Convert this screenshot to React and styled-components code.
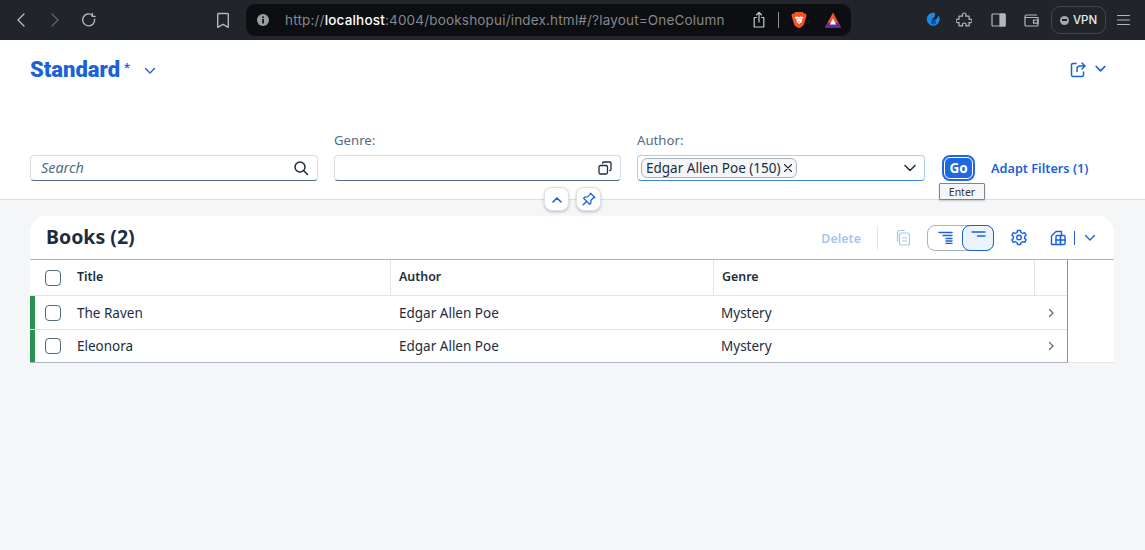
import React from "react";
import styled, { createGlobalStyle } from "styled-components";

const GlobalStyle = createGlobalStyle`
  html, body {
    margin: 0;
    padding: 0;
    background: #f5f6f7;
  }
  * {
    box-sizing: border-box;
  }
`;

const Page = styled.div`
  width: 1145px;
  height: 550px;
  overflow: hidden;
  display: flex;
  flex-direction: column;
  background: #f5f6f7;
  font-family: "Noto Sans", "Open Sans", sans-serif;
  font-size: 13.5px;
  color: #1d2d3e;
`;

/* browser chrome */
const BrowserBar = styled.div`
  height: 40px;
  flex: none;
  display: flex;
  align-items: center;
  background: #212529;
  color: #b4b7ba;
`;

const ChromeIcon = styled.span`
  display: inline-flex;
  flex: none;
  margin-left: ${({ $ml }) => $ml || 0}px;
  opacity: ${({ $dim }) => ($dim ? 0.4 : 1)};
`;

const UrlPill = styled.div`
  width: 605px;
  height: 32px;
  margin-left: 16px;
  flex: none;
  display: flex;
  align-items: center;
  padding-left: 10px;
  border-radius: 9px;
  background: #0d0e12;
`;

const UrlText = styled.div`
  margin-left: 15px;
  width: 451px;
  font-family: Inter, sans-serif;
  font-size: 13.5px;
  letter-spacing: 0.18px;
  white-space: nowrap;
  color: #85878a;
  b {
    font-weight: 500;
    color: #fff;
  }
`;

const PillDivider = styled.span`
  width: 1px;
  height: 16px;
  margin-left: 12px;
  background: #8d8f92;
`;

const VpnButton = styled.div`
  width: 55px;
  height: 28px;
  margin-left: 12px;
  display: flex;
  align-items: center;
  justify-content: center;
  gap: 4px;
  border: 1px solid #43474b;
  border-radius: 9px;
  font-family: Inter, sans-serif;
  font-size: 11.5px;
  font-weight: 500;
  color: #e9eaeb;
`;

const VpnDot = styled.span`
  width: 9px;
  height: 9px;
  border-radius: 50%;
  background: #a4a7ab;
  display: flex;
  align-items: center;
  justify-content: center;
  &::after {
    content: "";
    width: 5px;
    height: 1.5px;
    background: #212529;
  }
`;

/* dynamic page header */
const Header = styled.header`
  height: 160px;
  flex: none;
  position: relative;
  display: flex;
  flex-direction: column;
  padding: 0 31px 0 30px;
  background: #fff;
  border-bottom: 1px solid #dcdee0;
`;

const TitleRow = styled.div`
  height: 60px;
  flex: none;
  display: flex;
  align-items: center;
  justify-content: space-between;
`;

const VariantTitle = styled.div`
  display: flex;
  align-items: center;
  color: #1b62d8;
  font-family: Roboto, sans-serif;
  font-size: 22px;
  font-weight: 900;
  margin-top: -2px;
  sup {
    font-size: 13px;
    font-weight: 700;
    margin-left: 4px;
    line-height: 1;
    align-self: flex-start;
    margin-top: 4px;
  }
`;

const VariantChevron = styled.span`
  display: inline-flex;
  margin-left: 14px;
  margin-top: 3px;
`;

const ShareGroup = styled.div`
  display: flex;
  align-items: center;
  gap: 8px;
  margin: -2px 8px 0 0;
`;

const FilterBar = styled.div`
  display: flex;
  align-items: flex-end;
  margin-top: 34px;
  gap: 16px;
`;

const FilterField = styled.div`
  width: ${({ $w }) => $w}px;
  flex: none;
  display: flex;
  flex-direction: column;
`;

const FilterLabel = styled.label`
  height: 21px;
  font-size: 13.2px;
  line-height: 13px;
  color: #556b81;
`;

const InputBox = styled.div`
  height: 26px;
  display: flex;
  align-items: center;
  justify-content: space-between;
  padding: 0 8px 0 ${({ $tag }) => ($tag ? 3 : 10)}px;
  background: #fff;
  border: 1px solid ${({ $focus }) => ($focus ? "#a9cdf5" : "#d9dde1")};
  border-bottom: 1px solid ${({ $focus }) => ($focus ? "#3f86e0" : "#556b81")};
  border-radius: 4px;
`;

const SearchText = styled.span`
  margin-top: -2px;
  font-style: italic;
  font-size: 14.4px;
  color: #556b81;
`;

const Token = styled.span`
  height: 20px;
  display: inline-flex;
  align-items: center;
  padding: 0 3px 0 4px;
  gap: 2px;
  border: 1px solid #a9b4be;
  border-radius: 6px;
  background: #f5f6f7;
  font-size: 13.5px;
  white-space: nowrap;
`;

const GoWrap = styled.div`
  position: relative;
  width: 33px;
  height: 26px;
  flex: none;
  margin-left: 1px;
`;

const GoButton = styled.button`
  width: 33px;
  height: 26px;
  padding: 0;
  border: 2px solid #1f68e0;
  border-radius: 8px;
  outline: 1px solid #fff;
  outline-offset: -3px;
  background: #1f68e0;
  color: #fff;
  font-family: inherit;
  font-size: 13.5px;
  font-weight: 700;
`;

const Tooltip = styled.div`
  position: absolute;
  top: 28px;
  left: -3px;
  width: 46px;
  height: 17px;
  display: flex;
  align-items: center;
  justify-content: center;
  border: 1px solid #7d8690;
  border-radius: 1px;
  background: #f5f6f7;
  box-shadow: 0 1px 2px rgba(0, 0, 0, 0.2);
  font-size: 10.5px;
  color: #333;
  z-index: 2;
`;

const AdaptLink = styled.a`
  height: 26px;
  line-height: 26px;
  font-size: 12.7px;
  font-weight: 600;
  color: #1b62d8;
  white-space: nowrap;
`;

const HeaderButtons = styled.div`
  position: absolute;
  left: 544px;
  bottom: -12px;
  display: flex;
  gap: 7px;
  z-index: 1;
`;

const RoundButton = styled.button`
  width: 25px;
  height: 24px;
  padding: 0;
  display: flex;
  align-items: center;
  justify-content: center;
  background: #fff;
  border: 1px solid #dfe3e7;
  border-radius: 8px;
  box-shadow: 0 1px 3px rgba(85, 107, 129, 0.4);
`;

/* table panel */
const Content = styled.main`
  flex: 1;
  padding: 16px 31px 0 30px;
`;

const TablePanel = styled.section`
  background: #fff;
  border-radius: 16px 16px 0 0;
  border-bottom: 1px solid #e5e5e5;
`;

const TableToolbar = styled.div`
  height: 44px;
  display: flex;
  align-items: center;
  padding: 0 18px 0 16px;
  border-bottom: 1px solid #a9b4be;
`;

const TableTitle = styled.h2`
  margin: -2px auto 0 0;
  font-size: 19.5px;
  font-weight: 700;
  color: #1d2d3e;
`;

const DeleteText = styled.span`
  margin: 1px 0 0 0;
  font-size: 12.5px;
  font-weight: 600;
  color: #a9c5ef;
`;

const ToolDivider = styled.span`
  width: 1px;
  height: 24px;
  margin: 0 17px 0 16px;
  background: #e3e6e9;
`;

const SplitDivider = styled.span`
  width: 1px;
  height: 14px;
  margin: 0 9px 0 8px;
  background: #1b62d8;
`;

const Segmented = styled.div`
  width: 67px;
  height: 26px;
  margin-left: 16px;
  display: flex;
  border: 1px solid #a9b4be;
  border-radius: 8px;
`;

const Segment = styled.div`
  flex: 1;
  display: flex;
  align-items: center;
  justify-content: center;
  ${({ $active }) =>
    $active &&
    `
    flex: 0 0 32px;
    margin: -1px;
    background: #ebf3fd;
    border: 1px solid #1b62d8;
    border-radius: 8px;
  `}
`;

const ToolIcon = styled.span`
  display: inline-flex;
  margin-left: ${({ $ml }) => $ml || 0}px;
`;

const TableBody = styled.div`
  position: relative;
  width: 1038px;
  margin-bottom: -1px;
  border-right: 1px solid #8a939c;
  border-bottom: 1px solid #a9b4be;
`;

const Row = styled.div`
  display: grid;
  grid-template-columns: 361px 323px 321px 33px;
  height: ${({ $h }) => $h}px;
  border-bottom: ${({ $last }) => ($last ? "0" : "1px solid #e5e5e5")};
`;

const Cell = styled.div`
  display: flex;
  align-items: center;
  padding-left: ${({ $pl }) => $pl ?? 7}px;
  border-right: ${({ $line }) => ($line ? "1px solid #e5e5e5" : "0")};
  justify-content: ${({ $end }) => ($end ? "flex-end" : "flex-start")};
  padding-right: ${({ $end }) => ($end ? "13px" : "0")};
`;

const TitleCell = styled(Cell)`
  padding-left: 0;
`;

const HeadLabel = styled.span`
  margin-bottom: 3px;
  font-size: 12.4px;
  font-weight: 600;
`;

const Highlight = styled.span`
  width: 5px;
  align-self: stretch;
  flex: none;
  background: ${({ $on }) => ($on ? "#2a9250" : "transparent")};
`;

const Checkbox = styled.span`
  width: 16px;
  height: 16px;
  flex: none;
  margin: 0 16px 0 10px;
  border: 1px solid #556b81;
  border-radius: 4px;
  background: #fff;
`;

const Svg = ({ size = 16, w, h, children, stroke = "currentColor", sw = 1.4, fill = "none" }) => (
  <svg
    width={w || size}
    height={h || size}
    viewBox={`0 0 ${w || size} ${h || size}`}
    fill={fill}
    stroke={stroke}
    strokeWidth={sw}
    strokeLinecap="round"
    strokeLinejoin="round"
  >
    {children}
  </svg>
);

const BLUE = "#1b62d8";

const rows = [
  { title: "The Raven", author: "Edgar Allen Poe", genre: "Mystery", h: 34 },
  { title: "Eleonora", author: "Edgar Allen Poe", genre: "Mystery", h: 32, last: true },
];

function Browser() {
  return (
    <BrowserBar>
      <ChromeIcon $ml={16}>
        <Svg w={10} h={16}><path d="M8 2L2 8l6 6" /></Svg>
      </ChromeIcon>
      <ChromeIcon $ml={24} $dim>
        <Svg w={10} h={16}><path d="M2 2l6 6-6 6" /></Svg>
      </ChromeIcon>
      <ChromeIcon $ml={21}>
        <Svg size={16}>
          <path d="M13.6 7.2A6 6 0 1 1 11.5 3.3" />
          <path d="M11.8 1v3h3" transform="translate(-0.6 0.4)" />
        </Svg>
      </ChromeIcon>
      <ChromeIcon $ml={119}>
        <Svg w={14} h={17}><path d="M2.5 1.5h9a.8.8 0 0 1 .8.8v13l-5.3-3-5.3 3v-13a.8.8 0 0 1 .8-.8z" /></Svg>
      </ChromeIcon>
      <UrlPill>
        <Svg size={14} stroke="none" fill="#9b9da0">
          <circle cx="7" cy="7" r="6" />
          <rect x="6.2" y="6" width="1.7" height="4.5" fill="#0d0e12" />
          <rect x="6.2" y="3.4" width="1.7" height="1.7" fill="#0d0e12" />
        </Svg>
        <UrlText>
          http://<b>localhost</b>:4004/bookshopui/index.html#/?layout=OneColumn
        </UrlText>
        <ChromeIcon $ml={16}>
          <Svg w={14} h={18} sw={1.2} stroke="#c6c8ca">
            <path d="M4.5 6.5H2.2V16h9.6V6.5H9.5" />
            <path d="M7 11V1.5M4.6 3.8L7 1.5l2.4 2.3" />
          </Svg>
        </ChromeIcon>
        <PillDivider />
        <ChromeIcon $ml={12}>
          <Svg w={16} h={18} stroke="none" fill="#f1562b">
            <path d="M4.2 1h7.6l1.5 1.7 1.6-.3.6 2.2-.8 2.6-2.1 7-3 2.3-1.6.5-1.6-.5-3-2.3-2.1-7L.5 4.6l.6-2.2 1.6.3z" />
            <path d="M3.5 6.3L6 5.6l2 .7 2-.7 2.5.7-2 2.6.7 1.5L8 13l-2.7-2.6.7-1.5z" fill="#fff" />
            <path d="M6.3 7.3h1v1h-1zM8.7 7.3h1v1h-1zM7.4 10.2h1.2v1.3H7.4z" fill="#f1562b" />
          </Svg>
        </ChromeIcon>
        <ChromeIcon $ml={17}>
          <Svg w={18} h={16} stroke="none">
            <path d="M9 .5L1 15.5h16z" fill="#f1532b" />
            <path d="M1 15.5l2.700-5h10.600l2.700 5z" fill="#662d91" />
            <path d="M9 6.500l3.200 6H5.800z" fill="#fff" />
          </Svg>
        </ChromeIcon>
      </UrlPill>
      <ChromeIcon $ml={75}>
        <Svg w={14} h={16} stroke="none">
          <path d="M9 1a6.500 6.500 0 1 0 3.500 2.500C12 7 8 9 5.500 7.500 7.500 6.500 9.500 4.500 9 1z" fill="#1f88e5" />
          <circle cx="7.500" cy="10" r="2.500" fill="#0b4fb3" />
        </Svg>
      </ChromeIcon>
      <ChromeIcon $ml={16}>
        <Svg size={16} sw={1.2} stroke="#b4b7ba">
          <path d="M6.500 3.400a1.800 1.800 0 1 1 3.400 0l-.2.700h3.400v3.300l.7-.2a1.800 1.800 0 1 1 0 3.400l-.7-.2v3.500H9.800l.2-.7a1.800 1.800 0 1 0-3.500 0l.2.700H3v-3.500l-.7.200a1.800 1.800 0 1 1 0-3.400l.7.200V4.100h3.700z" />
        </Svg>
      </ChromeIcon>
      <ChromeIcon $ml={19}>
        <Svg w={15} h={14} sw={1.2} stroke="#b4b7ba">
          <rect x="1" y="1" width="13" height="12" rx="1" />
          <rect x="9" y="1" width="5" height="12" fill="#b4b7ba" />
        </Svg>
      </ChromeIcon>
      <ChromeIcon $ml={18}>
        <Svg w={15} h={14} sw={1.2} stroke="#b4b7ba">
          <path d="M1 3.500V12a1 1 0 0 0 1 1h11a1 1 0 0 0 1-1V4.500H2a1 1 0 0 1-1-1zm0 0A1.500 1.500 0 0 1 2.500 2h10" />
          <rect x="9.500" y="7" width="4.500" height="3.200" />
        </Svg>
      </ChromeIcon>
      <VpnButton>
        <VpnDot />
        VPN
      </VpnButton>
      <ChromeIcon $ml={11}>
        <Svg w={13} h={12} sw={1.1} stroke="#b4b7ba">
          <path d="M.5 1.500h12M.5 6h12M.5 10.500h12" />
        </Svg>
      </ChromeIcon>
    </BrowserBar>
  );
}

function PageHeader() {
  return (
    <Header>
      <TitleRow>
        <VariantTitle>
          Standard<sup>*</sup>
          <VariantChevron>
            <Svg w={12} h={8} stroke={BLUE}><path d="M1.500 1.500L6 6l4.500-4.500" /></Svg>
          </VariantChevron>
        </VariantTitle>
        <ShareGroup>
          <Svg size={17} stroke={BLUE} sw={1.5}>
            <path d="M6 2.500H3A1.500 1.500 0 0 0 1.500 4v10A1.500 1.500 0 0 0 3 15.500h9a1.500 1.500 0 0 0 1.500-1.500v-3" />
            <path d="M7 10.500V8a3 3 0 0 1 3-3h4.500M12 2l3 3-3 3" />
          </Svg>
          <Svg w={11} h={8} stroke={BLUE} sw={1.7}><path d="M1.200 1.500L5.500 5.800l4.300-4.300" /></Svg>
        </ShareGroup>
      </TitleRow>
      <FilterBar>
        <FilterField $w={288}>
          <InputBox>
            <SearchText>Search</SearchText>
            <Svg size={16} stroke="#1d2d3e" sw={1.5}>
              <circle cx="7" cy="7" r="5" />
              <path d="M10.800 10.800l3.700 3.700" />
            </Svg>
          </InputBox>
        </FilterField>
        <FilterField $w={287}>
          <FilterLabel>Genre:</FilterLabel>
          <InputBox>
            <span />
            <Svg size={14} stroke="#1d2d3e" sw={1.3}>
              <rect x="1" y="4.500" width="8.500" height="8.500" rx="1.500" />
              <path d="M4.500 2.200A1.200 1.200 0 0 1 5.700 1h6.100A1.200 1.200 0 0 1 13 2.200v6.100a1.200 1.200 0 0 1-1.200 1.200" />
            </Svg>
          </InputBox>
        </FilterField>
        <FilterField $w={288}>
          <FilterLabel>Author:</FilterLabel>
          <InputBox $focus $tag>
            <Token>
              Edgar Allen Poe (150)
              <Svg size={10} stroke="#1d2d3e" sw={1.1}><path d="M1.500 1.500l7 7M8.500 1.500l-7 7" /></Svg>
            </Token>
            <Svg w={12} h={8} stroke="#1d2d3e" sw={1.5}><path d="M1 1.500l5 5 5-5" /></Svg>
          </InputBox>
        </FilterField>
        <GoWrap>
          <GoButton>Go</GoButton>
          <Tooltip>Enter</Tooltip>
        </GoWrap>
        <AdaptLink>Adapt Filters (1)</AdaptLink>
      </FilterBar>
      <HeaderButtons>
        <RoundButton>
          <Svg w={10} h={7} stroke={BLUE} sw={1.6}><path d="M1 6l4-4 4 4" /></Svg>
        </RoundButton>
        <RoundButton>
          <Svg size={14} stroke={BLUE} sw={1.3}>
            <path d="M8.500 1.200l4.300 4.300-1.300.3-2.500 2.500-.2 3-1.200 1-6-6 1-1.200 3-.2 2.500-2.500zM4.300 9.700l-3.100 3.100" />
          </Svg>
        </RoundButton>
      </HeaderButtons>
    </Header>
  );
}

function Books() {
  return (
    <TablePanel>
      <TableToolbar>
        <TableTitle>Books (2)</TableTitle>
        <DeleteText>Delete</DeleteText>
        <ToolDivider />
        <Svg w={16} h={17} stroke="#a9c5ef" sw={1.2}>
          <path d="M2.500 12V3A1.500 1.500 0 0 1 4 1.500h5.500" />
          <rect x="4.500" y="4" width="10" height="12" rx="2" />
          <path d="M7.500 9h4M7.500 12h4" />
        </Svg>
        <Segmented>
          <Segment>
            <Svg w={15} h={13} stroke={BLUE} sw={1.4}>
              <path d="M1 1.500h13M5 4.500h9M8 7.500h6M8 10h6M8 12.500h6" />
            </Svg>
          </Segment>
          <Segment $active>
            <Svg w={15} h={13} stroke={BLUE} sw={1.4}>
              <path d="M1 1h13M6.500 5H14" />
            </Svg>
          </Segment>
        </Segmented>
        <ToolIcon $ml={17}>
          <Svg w={16} h={17} stroke={BLUE} sw={1.4}>
            <path d="M6.500 1.500h3l.5 2 1.700.9 2-.7 1.400 2.500-1.500 1.400v1.800l1.500 1.400-1.400 2.500-2-.7-1.700.9-.5 2h-3l-.5-2-1.700-.9-2 .7-1.400-2.500 1.500-1.400V7.600L.9 6.200l1.400-2.500 2 .7L6 3.500z" />
            <circle cx="8" cy="8.500" r="2.300" />
          </Svg>
        </ToolIcon>
        <ToolIcon $ml={23}>
          <Svg w={16} h={16} stroke={BLUE} sw={1.4}>
            <path d="M6 1.500h5.500v3M1.500 6L6 1.500M1.500 6v8a.5.500 0 0 0 .5.500h5" />
            <rect x="6" y="5.500" width="9" height="9" rx="1" fill="#fff" />
            <path d="M6 10h9M10.500 5.500v9" strokeWidth="1.700" />
          </Svg>
        </ToolIcon>
        <SplitDivider />
        <Svg w={12} h={8} stroke={BLUE} sw={1.4}><path d="M1.500 1.500L6 6l4.500-4.500" /></Svg>
      </TableToolbar>
      <TableBody>
        <Row $h={36}>
          <TitleCell $line>
            <Highlight />
            <Checkbox />
            <HeadLabel>Title</HeadLabel>
          </TitleCell>
          <Cell $line $pl={8}><HeadLabel>Author</HeadLabel></Cell>
          <Cell $line $pl={8}><HeadLabel>Genre</HeadLabel></Cell>
          <Cell />
        </Row>
        {rows.map((row) => (
          <Row key={row.title} $h={row.h} $last={row.last}>
            <TitleCell>
              <Highlight $on />
              <Checkbox />
              {row.title}
            </TitleCell>
            <Cell $pl={8}>{row.author}</Cell>
            <Cell>{row.genre}</Cell>
            <Cell $end $pl={0}>
              <Svg w={7} h={10} stroke="#556b81" sw={1.2}><path d="M1.500 1.500L5 5 1.500 8.500" /></Svg>
            </Cell>
          </Row>
        ))}
      </TableBody>
    </TablePanel>
  );
}

export default function App() {
  return (
    <Page>
      <GlobalStyle />
      <Browser />
      <PageHeader />
      <Content>
        <Books />
      </Content>
    </Page>
  );
}
